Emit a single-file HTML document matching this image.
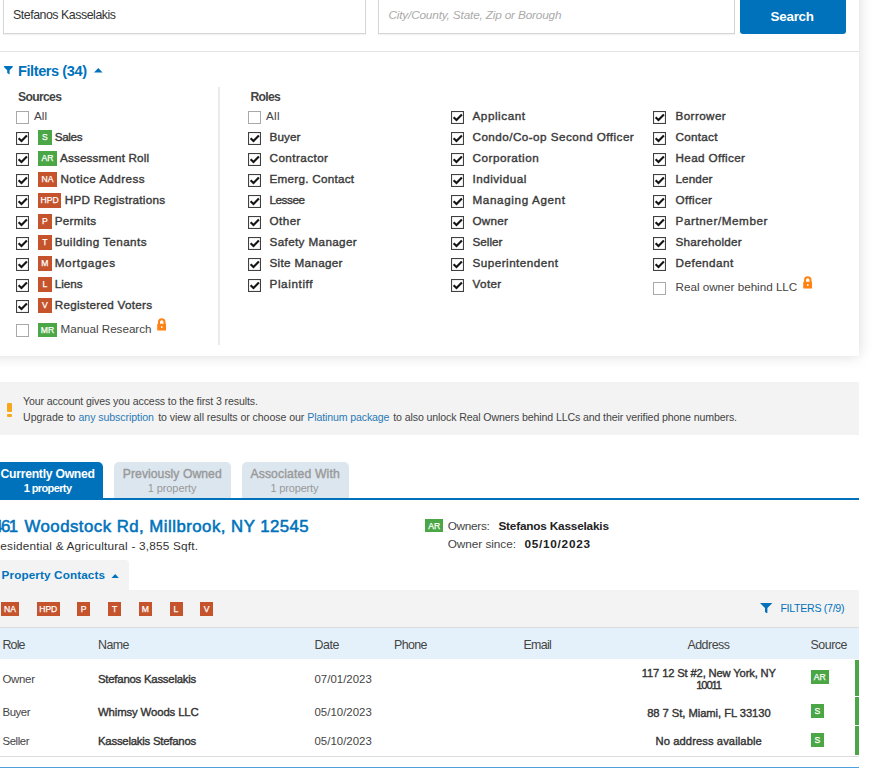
<!DOCTYPE html>
<html lang="en"><head><meta charset="utf-8"><title>Owner search</title>
<style>
html,body{margin:0;padding:0;background:#fff;}
body{width:880px;height:774px;position:relative;overflow:hidden;font-family:"Liberation Sans",sans-serif;color:#333;}
.a{position:absolute;}
.t{position:absolute;white-space:nowrap;line-height:20px;height:20px;}
.cb{position:absolute;display:block;}
.bd{position:absolute;display:block;color:#fff;-webkit-text-stroke:0.25px #fff;text-align:center;font-weight:400;white-space:nowrap;letter-spacing:0;}
</style></head><body>

<div class="a" style="left:-20px;top:-20px;width:879px;height:375.5px;background:#fff;box-shadow:0 0 13px rgba(0,0,0,0.15);"></div>
<div class="a" style="left:3px;top:-6px;width:360.5px;height:37.5px;border:1px solid #d6d6d6;background:#fff;box-shadow:0 1px 1px rgba(0,0,0,0.05);"></div>
<div class="a" style="left:378px;top:-6px;width:355px;height:37.5px;border:1px solid #d6d6d6;background:#fff;box-shadow:0 1px 1px rgba(0,0,0,0.05);"></div>
<div class="a" style="left:740px;top:-6px;width:105.6px;height:39.7px;background:#0072bc;border-radius:3px;"></div>
<div class="a" style="left:0;top:50.6px;width:859px;height:1px;background:#e4e4e4;"></div>
<svg class="cb" style="left:3.8px;top:66.3px" width="8.8" height="8.6" viewBox="0 0 8.8 8.6"><path d="M0.2 0H8.6Q9 0.9 8.4 1.5L5.6 4.3V8.6L3.2 7V4.3L0.4 1.5Q-0.2 0.9 0.2 0Z" fill="#0072bc"/></svg>
<svg class="cb" style="left:94.2px;top:68.4px" width="8.6" height="4.4" viewBox="0 0 8.6 4.4"><path d="M0 4.4L4.3 0L8.6 4.4Z" fill="#0072bc"/></svg>
<div class="a" style="left:218px;top:87px;width:2px;height:258px;background:#ebebeb;"></div>
<svg class="cb" style="left:16px;top:110.5px" width="13" height="13" viewBox="0 0 13 13"><rect x="0.5" y="0.5" width="12" height="12" fill="#fff" stroke="#a9a9a9"/></svg>
<svg class="cb" style="left:16px;top:132.0px" width="13" height="13" viewBox="0 0 13 13"><rect x="0.5" y="0.5" width="12" height="12" fill="#fff" stroke="#404040" stroke-width="1.15"/><path d="M2.6 6.2 L5.5 9.1 L10.9 3.5" fill="none" stroke="#151515" stroke-width="2.1"/></svg>
<svg class="cb" style="left:16px;top:153.0px" width="13" height="13" viewBox="0 0 13 13"><rect x="0.5" y="0.5" width="12" height="12" fill="#fff" stroke="#404040" stroke-width="1.15"/><path d="M2.6 6.2 L5.5 9.1 L10.9 3.5" fill="none" stroke="#151515" stroke-width="2.1"/></svg>
<svg class="cb" style="left:16px;top:174.0px" width="13" height="13" viewBox="0 0 13 13"><rect x="0.5" y="0.5" width="12" height="12" fill="#fff" stroke="#404040" stroke-width="1.15"/><path d="M2.6 6.2 L5.5 9.1 L10.9 3.5" fill="none" stroke="#151515" stroke-width="2.1"/></svg>
<svg class="cb" style="left:16px;top:195.0px" width="13" height="13" viewBox="0 0 13 13"><rect x="0.5" y="0.5" width="12" height="12" fill="#fff" stroke="#404040" stroke-width="1.15"/><path d="M2.6 6.2 L5.5 9.1 L10.9 3.5" fill="none" stroke="#151515" stroke-width="2.1"/></svg>
<svg class="cb" style="left:16px;top:216.0px" width="13" height="13" viewBox="0 0 13 13"><rect x="0.5" y="0.5" width="12" height="12" fill="#fff" stroke="#404040" stroke-width="1.15"/><path d="M2.6 6.2 L5.5 9.1 L10.9 3.5" fill="none" stroke="#151515" stroke-width="2.1"/></svg>
<svg class="cb" style="left:16px;top:237.0px" width="13" height="13" viewBox="0 0 13 13"><rect x="0.5" y="0.5" width="12" height="12" fill="#fff" stroke="#404040" stroke-width="1.15"/><path d="M2.6 6.2 L5.5 9.1 L10.9 3.5" fill="none" stroke="#151515" stroke-width="2.1"/></svg>
<svg class="cb" style="left:16px;top:258.0px" width="13" height="13" viewBox="0 0 13 13"><rect x="0.5" y="0.5" width="12" height="12" fill="#fff" stroke="#404040" stroke-width="1.15"/><path d="M2.6 6.2 L5.5 9.1 L10.9 3.5" fill="none" stroke="#151515" stroke-width="2.1"/></svg>
<svg class="cb" style="left:16px;top:279.0px" width="13" height="13" viewBox="0 0 13 13"><rect x="0.5" y="0.5" width="12" height="12" fill="#fff" stroke="#404040" stroke-width="1.15"/><path d="M2.6 6.2 L5.5 9.1 L10.9 3.5" fill="none" stroke="#151515" stroke-width="2.1"/></svg>
<svg class="cb" style="left:16px;top:300.0px" width="13" height="13" viewBox="0 0 13 13"><rect x="0.5" y="0.5" width="12" height="12" fill="#fff" stroke="#404040" stroke-width="1.15"/><path d="M2.6 6.2 L5.5 9.1 L10.9 3.5" fill="none" stroke="#151515" stroke-width="2.1"/></svg>
<svg class="cb" style="left:16px;top:323.75px" width="13" height="13" viewBox="0 0 13 13"><rect x="0.5" y="0.5" width="12" height="12" fill="#fff" stroke="#a9a9a9"/></svg>
<svg class="cb" style="left:247.5px;top:110.5px" width="13" height="13" viewBox="0 0 13 13"><rect x="0.5" y="0.5" width="12" height="12" fill="#fff" stroke="#a9a9a9"/></svg>
<svg class="cb" style="left:247.5px;top:132.0px" width="13" height="13" viewBox="0 0 13 13"><rect x="0.5" y="0.5" width="12" height="12" fill="#fff" stroke="#404040" stroke-width="1.15"/><path d="M2.6 6.2 L5.5 9.1 L10.9 3.5" fill="none" stroke="#151515" stroke-width="2.1"/></svg>
<svg class="cb" style="left:247.5px;top:153.0px" width="13" height="13" viewBox="0 0 13 13"><rect x="0.5" y="0.5" width="12" height="12" fill="#fff" stroke="#404040" stroke-width="1.15"/><path d="M2.6 6.2 L5.5 9.1 L10.9 3.5" fill="none" stroke="#151515" stroke-width="2.1"/></svg>
<svg class="cb" style="left:247.5px;top:174.0px" width="13" height="13" viewBox="0 0 13 13"><rect x="0.5" y="0.5" width="12" height="12" fill="#fff" stroke="#404040" stroke-width="1.15"/><path d="M2.6 6.2 L5.5 9.1 L10.9 3.5" fill="none" stroke="#151515" stroke-width="2.1"/></svg>
<svg class="cb" style="left:247.5px;top:195.0px" width="13" height="13" viewBox="0 0 13 13"><rect x="0.5" y="0.5" width="12" height="12" fill="#fff" stroke="#404040" stroke-width="1.15"/><path d="M2.6 6.2 L5.5 9.1 L10.9 3.5" fill="none" stroke="#151515" stroke-width="2.1"/></svg>
<svg class="cb" style="left:247.5px;top:216.0px" width="13" height="13" viewBox="0 0 13 13"><rect x="0.5" y="0.5" width="12" height="12" fill="#fff" stroke="#404040" stroke-width="1.15"/><path d="M2.6 6.2 L5.5 9.1 L10.9 3.5" fill="none" stroke="#151515" stroke-width="2.1"/></svg>
<svg class="cb" style="left:247.5px;top:237.0px" width="13" height="13" viewBox="0 0 13 13"><rect x="0.5" y="0.5" width="12" height="12" fill="#fff" stroke="#404040" stroke-width="1.15"/><path d="M2.6 6.2 L5.5 9.1 L10.9 3.5" fill="none" stroke="#151515" stroke-width="2.1"/></svg>
<svg class="cb" style="left:247.5px;top:258.0px" width="13" height="13" viewBox="0 0 13 13"><rect x="0.5" y="0.5" width="12" height="12" fill="#fff" stroke="#404040" stroke-width="1.15"/><path d="M2.6 6.2 L5.5 9.1 L10.9 3.5" fill="none" stroke="#151515" stroke-width="2.1"/></svg>
<svg class="cb" style="left:247.5px;top:279.0px" width="13" height="13" viewBox="0 0 13 13"><rect x="0.5" y="0.5" width="12" height="12" fill="#fff" stroke="#404040" stroke-width="1.15"/><path d="M2.6 6.2 L5.5 9.1 L10.9 3.5" fill="none" stroke="#151515" stroke-width="2.1"/></svg>
<svg class="cb" style="left:450.5px;top:110.5px" width="13" height="13" viewBox="0 0 13 13"><rect x="0.5" y="0.5" width="12" height="12" fill="#fff" stroke="#404040" stroke-width="1.15"/><path d="M2.6 6.2 L5.5 9.1 L10.9 3.5" fill="none" stroke="#151515" stroke-width="2.1"/></svg>
<svg class="cb" style="left:450.5px;top:131.5px" width="13" height="13" viewBox="0 0 13 13"><rect x="0.5" y="0.5" width="12" height="12" fill="#fff" stroke="#404040" stroke-width="1.15"/><path d="M2.6 6.2 L5.5 9.1 L10.9 3.5" fill="none" stroke="#151515" stroke-width="2.1"/></svg>
<svg class="cb" style="left:450.5px;top:152.5px" width="13" height="13" viewBox="0 0 13 13"><rect x="0.5" y="0.5" width="12" height="12" fill="#fff" stroke="#404040" stroke-width="1.15"/><path d="M2.6 6.2 L5.5 9.1 L10.9 3.5" fill="none" stroke="#151515" stroke-width="2.1"/></svg>
<svg class="cb" style="left:450.5px;top:173.5px" width="13" height="13" viewBox="0 0 13 13"><rect x="0.5" y="0.5" width="12" height="12" fill="#fff" stroke="#404040" stroke-width="1.15"/><path d="M2.6 6.2 L5.5 9.1 L10.9 3.5" fill="none" stroke="#151515" stroke-width="2.1"/></svg>
<svg class="cb" style="left:450.5px;top:194.5px" width="13" height="13" viewBox="0 0 13 13"><rect x="0.5" y="0.5" width="12" height="12" fill="#fff" stroke="#404040" stroke-width="1.15"/><path d="M2.6 6.2 L5.5 9.1 L10.9 3.5" fill="none" stroke="#151515" stroke-width="2.1"/></svg>
<svg class="cb" style="left:450.5px;top:215.5px" width="13" height="13" viewBox="0 0 13 13"><rect x="0.5" y="0.5" width="12" height="12" fill="#fff" stroke="#404040" stroke-width="1.15"/><path d="M2.6 6.2 L5.5 9.1 L10.9 3.5" fill="none" stroke="#151515" stroke-width="2.1"/></svg>
<svg class="cb" style="left:450.5px;top:236.5px" width="13" height="13" viewBox="0 0 13 13"><rect x="0.5" y="0.5" width="12" height="12" fill="#fff" stroke="#404040" stroke-width="1.15"/><path d="M2.6 6.2 L5.5 9.1 L10.9 3.5" fill="none" stroke="#151515" stroke-width="2.1"/></svg>
<svg class="cb" style="left:450.5px;top:257.5px" width="13" height="13" viewBox="0 0 13 13"><rect x="0.5" y="0.5" width="12" height="12" fill="#fff" stroke="#404040" stroke-width="1.15"/><path d="M2.6 6.2 L5.5 9.1 L10.9 3.5" fill="none" stroke="#151515" stroke-width="2.1"/></svg>
<svg class="cb" style="left:450.5px;top:278.5px" width="13" height="13" viewBox="0 0 13 13"><rect x="0.5" y="0.5" width="12" height="12" fill="#fff" stroke="#404040" stroke-width="1.15"/><path d="M2.6 6.2 L5.5 9.1 L10.9 3.5" fill="none" stroke="#151515" stroke-width="2.1"/></svg>
<svg class="cb" style="left:653.25px;top:110.5px" width="13" height="13" viewBox="0 0 13 13"><rect x="0.5" y="0.5" width="12" height="12" fill="#fff" stroke="#404040" stroke-width="1.15"/><path d="M2.6 6.2 L5.5 9.1 L10.9 3.5" fill="none" stroke="#151515" stroke-width="2.1"/></svg>
<svg class="cb" style="left:653.25px;top:131.5px" width="13" height="13" viewBox="0 0 13 13"><rect x="0.5" y="0.5" width="12" height="12" fill="#fff" stroke="#404040" stroke-width="1.15"/><path d="M2.6 6.2 L5.5 9.1 L10.9 3.5" fill="none" stroke="#151515" stroke-width="2.1"/></svg>
<svg class="cb" style="left:653.25px;top:152.5px" width="13" height="13" viewBox="0 0 13 13"><rect x="0.5" y="0.5" width="12" height="12" fill="#fff" stroke="#404040" stroke-width="1.15"/><path d="M2.6 6.2 L5.5 9.1 L10.9 3.5" fill="none" stroke="#151515" stroke-width="2.1"/></svg>
<svg class="cb" style="left:653.25px;top:173.5px" width="13" height="13" viewBox="0 0 13 13"><rect x="0.5" y="0.5" width="12" height="12" fill="#fff" stroke="#404040" stroke-width="1.15"/><path d="M2.6 6.2 L5.5 9.1 L10.9 3.5" fill="none" stroke="#151515" stroke-width="2.1"/></svg>
<svg class="cb" style="left:653.25px;top:194.5px" width="13" height="13" viewBox="0 0 13 13"><rect x="0.5" y="0.5" width="12" height="12" fill="#fff" stroke="#404040" stroke-width="1.15"/><path d="M2.6 6.2 L5.5 9.1 L10.9 3.5" fill="none" stroke="#151515" stroke-width="2.1"/></svg>
<svg class="cb" style="left:653.25px;top:215.5px" width="13" height="13" viewBox="0 0 13 13"><rect x="0.5" y="0.5" width="12" height="12" fill="#fff" stroke="#404040" stroke-width="1.15"/><path d="M2.6 6.2 L5.5 9.1 L10.9 3.5" fill="none" stroke="#151515" stroke-width="2.1"/></svg>
<svg class="cb" style="left:653.25px;top:236.5px" width="13" height="13" viewBox="0 0 13 13"><rect x="0.5" y="0.5" width="12" height="12" fill="#fff" stroke="#404040" stroke-width="1.15"/><path d="M2.6 6.2 L5.5 9.1 L10.9 3.5" fill="none" stroke="#151515" stroke-width="2.1"/></svg>
<svg class="cb" style="left:653.25px;top:257.5px" width="13" height="13" viewBox="0 0 13 13"><rect x="0.5" y="0.5" width="12" height="12" fill="#fff" stroke="#404040" stroke-width="1.15"/><path d="M2.6 6.2 L5.5 9.1 L10.9 3.5" fill="none" stroke="#151515" stroke-width="2.1"/></svg>
<svg class="cb" style="left:653.25px;top:282px" width="13" height="13" viewBox="0 0 13 13"><rect x="0.5" y="0.5" width="12" height="12" fill="#fff" stroke="#a9a9a9"/></svg>
<span class="bd" style="left:38.3px;top:130.4px;width:13.25px;height:14.3px;line-height:15.9px;background:#4ba746;font-size:8.6px">S</span>
<span class="bd" style="left:38.3px;top:151.4px;width:18.5px;height:14.3px;line-height:15.9px;background:#4ba746;font-size:8.6px">AR</span>
<span class="bd" style="left:38.3px;top:172.4px;width:18.5px;height:14.3px;line-height:15.9px;background:#c5542c;font-size:8.6px">NA</span>
<span class="bd" style="left:38.3px;top:193.4px;width:22.5px;height:14.3px;line-height:15.9px;background:#c5542c;font-size:8.6px">HPD</span>
<span class="bd" style="left:38.3px;top:214.4px;width:13.25px;height:14.3px;line-height:15.9px;background:#c5542c;font-size:8.6px">P</span>
<span class="bd" style="left:38.3px;top:235.4px;width:13.25px;height:14.3px;line-height:15.9px;background:#c5542c;font-size:8.6px">T</span>
<span class="bd" style="left:38.3px;top:256.4px;width:13.25px;height:14.3px;line-height:15.9px;background:#c5542c;font-size:8.6px">M</span>
<span class="bd" style="left:38.3px;top:277.4px;width:13.25px;height:14.3px;line-height:15.9px;background:#c5542c;font-size:8.6px">L</span>
<span class="bd" style="left:38.3px;top:298.4px;width:13.25px;height:14.3px;line-height:15.9px;background:#c5542c;font-size:8.6px">V</span>
<span class="bd" style="left:38.3px;top:323px;width:18.5px;height:14px;line-height:15.6px;background:#4ba746;font-size:8.6px">MR</span>
<svg class="cb" style="left:156.6px;top:318.2px" width="9.5" height="12.7" viewBox="0 0 9.5 12.7"><path d="M2 6.2V3.9a2.75 2.75 0 0 1 5.5 0V6.2" fill="none" stroke="#ff8212" stroke-width="2"/><rect x="0.2" y="5.8" width="9.1" height="6.8" rx="0.9" fill="#ff8212"/><rect x="4.05" y="8.1" width="1.4" height="1.9" rx="0.5" fill="#fff"/></svg>
<svg class="cb" style="left:802.6px;top:276.0px" width="9.5" height="12.7" viewBox="0 0 9.5 12.7"><path d="M2 6.2V3.9a2.75 2.75 0 0 1 5.5 0V6.2" fill="none" stroke="#ff8212" stroke-width="2"/><rect x="0.2" y="5.8" width="9.1" height="6.8" rx="0.9" fill="#ff8212"/><rect x="4.05" y="8.1" width="1.4" height="1.9" rx="0.5" fill="#fff"/></svg>
<div class="a" style="left:0;top:382px;width:859px;height:53px;background:#f3f3f3;"></div>
<div class="a" style="left:7px;top:403px;width:4.5px;height:9px;background:#f6a81c;border-radius:1px;"></div>
<div class="a" style="left:7px;top:413.5px;width:4.5px;height:3.5px;background:#f6a81c;border-radius:1px;"></div>
<div class="a" style="left:-5px;top:461.75px;width:108.25px;height:37px;background:#0072bc;border-radius:0 5px 0 0;"></div>
<div class="a" style="left:113.6px;top:461.75px;width:117.7px;height:36.5px;background:#dce6ef;border-radius:5px 5px 0 0;"></div>
<div class="a" style="left:241.5px;top:461.75px;width:107.5px;height:36.5px;background:#dce6ef;border-radius:5px 5px 0 0;"></div>
<div class="a" style="left:0;top:498px;width:859px;height:1.7px;background:#0072bc;"></div>
<span class="bd" style="left:425.2px;top:518.6px;width:18.2px;height:13.7px;line-height:15.299999999999999px;background:#4ba746;font-size:8.6px">AR</span>
<div class="a" style="left:0;top:560px;width:128.75px;height:31px;background:#f3f3f3;border-radius:0 4px 0 0;"></div>
<div class="a" style="left:0;top:590.3px;width:858.7px;height:37.2px;background:#f3f3f3;"></div>
<svg class="cb" style="left:110.6px;top:573.9px" width="8.4" height="4.6" viewBox="0 0 8.4 4.6"><path d="M0 4.6L4.2 0L8.4 4.6Z" fill="#0072bc"/></svg>
<span class="bd" style="left:1px;top:602px;width:18.2px;height:13.9px;line-height:15.5px;background:#c5542c;font-size:8.6px">NA</span>
<span class="bd" style="left:37px;top:602px;width:22.5px;height:13.9px;line-height:15.5px;background:#c5542c;font-size:8.6px">HPD</span>
<span class="bd" style="left:77px;top:602px;width:13.25px;height:13.9px;line-height:15.5px;background:#c5542c;font-size:8.6px">P</span>
<span class="bd" style="left:108px;top:602px;width:13px;height:13.9px;line-height:15.5px;background:#c5542c;font-size:8.6px">T</span>
<span class="bd" style="left:138.75px;top:602px;width:13px;height:13.9px;line-height:15.5px;background:#c5542c;font-size:8.6px">M</span>
<span class="bd" style="left:169.5px;top:602px;width:13px;height:13.9px;line-height:15.5px;background:#c5542c;font-size:8.6px">L</span>
<span class="bd" style="left:200px;top:602px;width:13.25px;height:13.9px;line-height:15.5px;background:#c5542c;font-size:8.6px">V</span>
<svg class="cb" style="left:760.2px;top:602.6px" width="12.4" height="10.6" viewBox="0 0 12.4 10.6"><path d="M0 0H12.4L7.4 5V10.6L5 9V5Z" fill="#0072bc"/></svg>
<div class="a" style="left:0;top:627.3px;width:858.7px;height:1px;background:#dcdcdc;"></div>
<div class="a" style="left:0;top:628.3px;width:858.7px;height:30.5px;background:#e5f1fa;"></div>
<div class="a" style="left:855.3px;top:659.8px;width:3.5px;height:36.5px;background:#4ba746;"></div>
<div class="a" style="left:855.3px;top:697.2px;width:3.5px;height:28.3px;background:#4ba746;"></div>
<div class="a" style="left:855.3px;top:726.4px;width:3.5px;height:28.3px;background:#4ba746;"></div>
<span class="bd" style="left:810.7px;top:670.2px;width:18.3px;height:14px;line-height:15.6px;background:#4ba746;font-size:8.6px">AR</span>
<span class="bd" style="left:810.7px;top:703.9px;width:13.2px;height:13.9px;line-height:15.5px;background:#4ba746;font-size:8.6px">S</span>
<span class="bd" style="left:810.7px;top:733px;width:13.2px;height:13.8px;line-height:15.4px;background:#4ba746;font-size:8.6px">S</span>
<div class="a" style="left:0;top:756px;width:858.7px;height:1px;background:#dcdcdc;"></div>
<div class="a" style="left:0;top:766.8px;width:858.7px;height:1px;background:#4f9fdc;"></div>
<span class="t" id="t0" style="left:13.00px;top:5.20px;font-size:12.4px;font-weight:400;color:#333;letter-spacing:-0.477px;">Stefanos Kasselakis</span>
<span class="t" id="t1" style="left:388.40px;top:4.91px;font-size:11.8px;font-weight:400;color:#aaa;letter-spacing:-0.170px;font-style:italic;">City/County, State, Zip or Borough</span>
<span class="t" id="t2" style="left:770.60px;top:6.56px;font-size:13.4px;font-weight:700;color:#fff;letter-spacing:-0.255px;">Search</span>
<span class="t" id="t3" style="left:18.00px;top:60.54px;font-size:14.6px;font-weight:700;color:#0072bc;letter-spacing:-0.437px;">Filters (34)</span>
<span class="t" id="t4" style="left:18.00px;top:86.57px;font-size:12.2px;font-weight:700;color:#444;letter-spacing:-0.683px;">Sources</span>
<span class="t" id="t5" style="left:250.50px;top:86.57px;font-size:12.2px;font-weight:700;color:#444;letter-spacing:-0.723px;">Roles</span>
<span class="t" id="t6" style="left:34.00px;top:106.35px;font-size:11.7px;font-weight:400;color:#444;letter-spacing:-0.000px;">All</span>
<span class="t" id="t7" style="left:54.75px;top:127.35px;font-size:11.7px;font-weight:400;color:#3a3a3a;letter-spacing:-0.375px;-webkit-text-stroke:0.38px #3a3a3a;">Sales</span>
<span class="t" id="t8" style="left:60.00px;top:148.35px;font-size:11.7px;font-weight:400;color:#3a3a3a;letter-spacing:0.140px;-webkit-text-stroke:0.38px #3a3a3a;">Assessment Roll</span>
<span class="t" id="t9" style="left:60.50px;top:169.35px;font-size:11.7px;font-weight:400;color:#3a3a3a;letter-spacing:0.415px;-webkit-text-stroke:0.38px #3a3a3a;">Notice Address</span>
<span class="t" id="t10" style="left:64.75px;top:190.35px;font-size:11.7px;font-weight:400;color:#3a3a3a;letter-spacing:0.258px;-webkit-text-stroke:0.38px #3a3a3a;">HPD Registrations</span>
<span class="t" id="t11" style="left:54.75px;top:211.35px;font-size:11.7px;font-weight:400;color:#3a3a3a;letter-spacing:0.273px;-webkit-text-stroke:0.38px #3a3a3a;">Permits</span>
<span class="t" id="t12" style="left:54.75px;top:232.35px;font-size:11.7px;font-weight:400;color:#3a3a3a;letter-spacing:0.412px;-webkit-text-stroke:0.38px #3a3a3a;">Building Tenants</span>
<span class="t" id="t13" style="left:54.75px;top:253.35px;font-size:11.7px;font-weight:400;color:#3a3a3a;letter-spacing:0.629px;-webkit-text-stroke:0.38px #3a3a3a;">Mortgages</span>
<span class="t" id="t14" style="left:54.75px;top:274.35px;font-size:11.7px;font-weight:400;color:#3a3a3a;letter-spacing:-0.051px;-webkit-text-stroke:0.38px #3a3a3a;">Liens</span>
<span class="t" id="t15" style="left:54.75px;top:295.35px;font-size:11.7px;font-weight:400;color:#3a3a3a;letter-spacing:0.271px;-webkit-text-stroke:0.38px #3a3a3a;">Registered Voters</span>
<span class="t" id="t16" style="left:60.50px;top:319.45px;font-size:11.7px;font-weight:400;color:#444;letter-spacing:-0.044px;">Manual Research</span>
<span class="t" id="t17" style="left:266.00px;top:106.35px;font-size:11.7px;font-weight:400;color:#444;letter-spacing:0.250px;">All</span>
<span class="t" id="t18" style="left:269.50px;top:127.35px;font-size:11.7px;font-weight:400;color:#3a3a3a;letter-spacing:0.114px;-webkit-text-stroke:0.38px #3a3a3a;">Buyer</span>
<span class="t" id="t19" style="left:269.50px;top:148.35px;font-size:11.7px;font-weight:400;color:#3a3a3a;letter-spacing:0.436px;-webkit-text-stroke:0.38px #3a3a3a;">Contractor</span>
<span class="t" id="t20" style="left:269.50px;top:169.35px;font-size:11.7px;font-weight:400;color:#3a3a3a;letter-spacing:0.253px;-webkit-text-stroke:0.38px #3a3a3a;">Emerg. Contact</span>
<span class="t" id="t21" style="left:269.50px;top:190.35px;font-size:11.7px;font-weight:400;color:#3a3a3a;letter-spacing:-0.439px;-webkit-text-stroke:0.38px #3a3a3a;">Lessee</span>
<span class="t" id="t22" style="left:269.50px;top:211.35px;font-size:11.7px;font-weight:400;color:#3a3a3a;letter-spacing:0.442px;-webkit-text-stroke:0.38px #3a3a3a;">Other</span>
<span class="t" id="t23" style="left:269.50px;top:232.35px;font-size:11.7px;font-weight:400;color:#3a3a3a;letter-spacing:0.364px;-webkit-text-stroke:0.38px #3a3a3a;">Safety Manager</span>
<span class="t" id="t24" style="left:269.50px;top:253.35px;font-size:11.7px;font-weight:400;color:#3a3a3a;letter-spacing:0.316px;-webkit-text-stroke:0.38px #3a3a3a;">Site Manager</span>
<span class="t" id="t25" style="left:269.50px;top:274.35px;font-size:11.7px;font-weight:400;color:#3a3a3a;letter-spacing:0.609px;-webkit-text-stroke:0.38px #3a3a3a;">Plaintiff</span>
<span class="t" id="t26" style="left:472.50px;top:106.35px;font-size:11.7px;font-weight:400;color:#3a3a3a;letter-spacing:0.552px;-webkit-text-stroke:0.38px #3a3a3a;">Applicant</span>
<span class="t" id="t27" style="left:472.50px;top:127.35px;font-size:11.7px;font-weight:400;color:#3a3a3a;letter-spacing:0.455px;-webkit-text-stroke:0.38px #3a3a3a;">Condo/Co-op Second Officer</span>
<span class="t" id="t28" style="left:472.50px;top:148.35px;font-size:11.7px;font-weight:400;color:#3a3a3a;letter-spacing:0.517px;-webkit-text-stroke:0.38px #3a3a3a;">Corporation</span>
<span class="t" id="t29" style="left:472.50px;top:169.35px;font-size:11.7px;font-weight:400;color:#3a3a3a;letter-spacing:0.484px;-webkit-text-stroke:0.38px #3a3a3a;">Individual</span>
<span class="t" id="t30" style="left:472.50px;top:190.35px;font-size:11.7px;font-weight:400;color:#3a3a3a;letter-spacing:0.616px;-webkit-text-stroke:0.38px #3a3a3a;">Managing Agent</span>
<span class="t" id="t31" style="left:472.50px;top:211.35px;font-size:11.7px;font-weight:400;color:#3a3a3a;letter-spacing:0.266px;-webkit-text-stroke:0.38px #3a3a3a;">Owner</span>
<span class="t" id="t32" style="left:472.50px;top:232.35px;font-size:11.7px;font-weight:400;color:#3a3a3a;letter-spacing:0.021px;-webkit-text-stroke:0.38px #3a3a3a;">Seller</span>
<span class="t" id="t33" style="left:472.50px;top:253.35px;font-size:11.7px;font-weight:400;color:#3a3a3a;letter-spacing:0.477px;-webkit-text-stroke:0.38px #3a3a3a;">Superintendent</span>
<span class="t" id="t34" style="left:472.50px;top:274.35px;font-size:11.7px;font-weight:400;color:#3a3a3a;letter-spacing:0.364px;-webkit-text-stroke:0.38px #3a3a3a;">Voter</span>
<span class="t" id="t35" style="left:675.50px;top:106.35px;font-size:11.7px;font-weight:400;color:#3a3a3a;letter-spacing:0.403px;-webkit-text-stroke:0.38px #3a3a3a;">Borrower</span>
<span class="t" id="t36" style="left:675.50px;top:127.35px;font-size:11.7px;font-weight:400;color:#3a3a3a;letter-spacing:0.286px;-webkit-text-stroke:0.38px #3a3a3a;">Contact</span>
<span class="t" id="t37" style="left:675.50px;top:148.35px;font-size:11.7px;font-weight:400;color:#3a3a3a;letter-spacing:0.373px;-webkit-text-stroke:0.38px #3a3a3a;">Head Officer</span>
<span class="t" id="t38" style="left:675.50px;top:169.35px;font-size:11.7px;font-weight:400;color:#3a3a3a;letter-spacing:0.121px;-webkit-text-stroke:0.38px #3a3a3a;">Lender</span>
<span class="t" id="t39" style="left:675.50px;top:190.35px;font-size:11.7px;font-weight:400;color:#3a3a3a;letter-spacing:0.382px;-webkit-text-stroke:0.38px #3a3a3a;">Officer</span>
<span class="t" id="t40" style="left:675.50px;top:211.35px;font-size:11.7px;font-weight:400;color:#3a3a3a;letter-spacing:0.581px;-webkit-text-stroke:0.38px #3a3a3a;">Partner/Member</span>
<span class="t" id="t41" style="left:675.50px;top:232.35px;font-size:11.7px;font-weight:400;color:#3a3a3a;letter-spacing:0.252px;-webkit-text-stroke:0.38px #3a3a3a;">Shareholder</span>
<span class="t" id="t42" style="left:675.50px;top:253.35px;font-size:11.7px;font-weight:400;color:#3a3a3a;letter-spacing:0.482px;-webkit-text-stroke:0.38px #3a3a3a;">Defendant</span>
<span class="t" id="t43" style="left:675.50px;top:277.25px;font-size:11.7px;font-weight:400;color:#444;letter-spacing:-0.018px;">Real owner behind LLC</span>
<span class="t" id="t44" style="left:23.00px;top:390.93px;font-size:10.6px;font-weight:400;color:#444;letter-spacing:-0.105px;">Your account gives you access to the first 3 results.</span>
<span class="t" id="t45" style="left:23.00px;top:407.03px;font-size:10.6px;font-weight:400;color:#444;letter-spacing:0.009px;">Upgrade to</span>
<span class="t" id="t46" style="left:78.50px;top:407.03px;font-size:10.6px;font-weight:400;color:#2a7ab8;letter-spacing:-0.071px;">any subscription</span>
<span class="t" id="t47" style="left:158.20px;top:407.03px;font-size:10.6px;font-weight:400;color:#444;letter-spacing:-0.069px;">to view all results or choose our</span>
<span class="t" id="t48" style="left:307.30px;top:407.03px;font-size:10.6px;font-weight:400;color:#2a7ab8;letter-spacing:-0.135px;">Platinum package</span>
<span class="t" id="t49" style="left:393.30px;top:407.03px;font-size:10.6px;font-weight:400;color:#444;letter-spacing:-0.119px;">to also unlock Real Owners behind LLCs and their verified phone numbers.</span>
<span class="t" id="t50" style="left:0.50px;top:463.77px;font-size:12.2px;font-weight:700;color:#fff;letter-spacing:-0.264px;">Currently Owned</span>
<span class="t" id="t51" style="left:23.75px;top:477.59px;font-size:11px;font-weight:700;color:#fff;letter-spacing:-0.616px;">1 property</span>
<span class="t" id="t52" style="left:122.80px;top:463.77px;font-size:12.2px;font-weight:400;color:#999;letter-spacing:0.045px;-webkit-text-stroke:0.38px #999;">Previously Owned</span>
<span class="t" id="t53" style="left:147.70px;top:477.59px;font-size:11px;font-weight:400;color:#999;letter-spacing:-0.081px;">1 property</span>
<span class="t" id="t54" style="left:250.40px;top:463.77px;font-size:12.2px;font-weight:400;color:#999;letter-spacing:0.137px;-webkit-text-stroke:0.38px #999;">Associated With</span>
<span class="t" id="t55" style="left:270.50px;top:477.59px;font-size:11px;font-weight:400;color:#999;letter-spacing:-0.170px;">1 property</span>
<span class="t" id="t56" style="left:-6.70px;top:517.18px;font-size:16.8px;font-weight:400;color:#0072bc;letter-spacing:-1.606px;-webkit-text-stroke:0.55px #0072bc;">461</span>
<span class="t" id="t57" style="left:24.50px;top:517.18px;font-size:16.8px;font-weight:400;color:#0072bc;letter-spacing:0.477px;-webkit-text-stroke:0.55px #0072bc;">Woodstock Rd, Millbrook, NY 12545</span>
<span class="t" id="t58" style="left:-8.40px;top:536.41px;font-size:11.8px;font-weight:400;color:#333;letter-spacing:0.198px;">Residential &amp; Agricultural - 3,855 Sqft.</span>
<span class="t" id="t59" style="left:447.70px;top:516.21px;font-size:11.8px;font-weight:400;color:#444;letter-spacing:-0.305px;">Owners:</span>
<span class="t" id="t60" style="left:498.40px;top:516.21px;font-size:11.8px;font-weight:700;color:#222;letter-spacing:-0.194px;">Stefanos Kasselakis</span>
<span class="t" id="t61" style="left:447.70px;top:534.21px;font-size:11.8px;font-weight:400;color:#444;letter-spacing:-0.051px;">Owner since:</span>
<span class="t" id="t62" style="left:524.50px;top:534.21px;font-size:11.8px;font-weight:700;color:#222;letter-spacing:0.717px;">05/10/2023</span>
<span class="t" id="t63" style="left:1.60px;top:564.95px;font-size:11.7px;font-weight:700;color:#0072bc;letter-spacing:0.130px;">Property Contacts</span>
<span class="t" id="t64" style="left:780.40px;top:598.33px;font-size:10.6px;font-weight:400;color:#0072bc;letter-spacing:-0.284px;">FILTERS (7/9)</span>
<span class="t" id="t65" style="left:2.50px;top:634.90px;font-size:12.4px;font-weight:400;color:#444;letter-spacing:-0.828px;">Role</span>
<span class="t" id="t66" style="left:98.00px;top:634.90px;font-size:12.4px;font-weight:400;color:#444;letter-spacing:-0.519px;">Name</span>
<span class="t" id="t67" style="left:314.50px;top:634.90px;font-size:12.4px;font-weight:400;color:#444;letter-spacing:-0.429px;">Date</span>
<span class="t" id="t68" style="left:394.00px;top:634.90px;font-size:12.4px;font-weight:400;color:#444;letter-spacing:-0.608px;">Phone</span>
<span class="t" id="t69" style="left:523.50px;top:634.90px;font-size:12.4px;font-weight:400;color:#444;letter-spacing:-0.674px;">Email</span>
<span class="t" id="t70" style="left:687.40px;top:634.90px;font-size:12.4px;font-weight:400;color:#444;letter-spacing:-0.475px;">Address</span>
<span class="t" id="t71" style="left:810.50px;top:634.90px;font-size:12.4px;font-weight:400;color:#444;letter-spacing:-0.453px;">Source</span>
<span class="t" id="t72" style="left:2.50px;top:668.65px;font-size:11.4px;font-weight:400;color:#444;letter-spacing:-0.266px;">Owner</span>
<span class="t" id="t73" style="left:2.50px;top:701.85px;font-size:11.4px;font-weight:400;color:#444;letter-spacing:-0.440px;">Buyer</span>
<span class="t" id="t74" style="left:2.50px;top:731.05px;font-size:11.4px;font-weight:400;color:#444;letter-spacing:-0.425px;">Seller</span>
<span class="t" id="t75" style="left:98.00px;top:668.65px;font-size:11.4px;font-weight:400;color:#333;letter-spacing:-0.241px;-webkit-text-stroke:0.38px #333;">Stefanos Kasselakis</span>
<span class="t" id="t76" style="left:98.00px;top:701.85px;font-size:11.4px;font-weight:400;color:#333;letter-spacing:-0.148px;-webkit-text-stroke:0.38px #333;">Whimsy Woods LLC</span>
<span class="t" id="t77" style="left:98.00px;top:731.05px;font-size:11.4px;font-weight:400;color:#333;letter-spacing:-0.241px;-webkit-text-stroke:0.38px #333;">Kasselakis Stefanos</span>
<span class="t" id="t78" style="left:314.50px;top:668.65px;font-size:11.4px;font-weight:400;color:#444;letter-spacing:0.031px;">07/01/2023</span>
<span class="t" id="t79" style="left:314.50px;top:701.85px;font-size:11.4px;font-weight:400;color:#444;letter-spacing:0.031px;">05/10/2023</span>
<span class="t" id="t80" style="left:314.50px;top:731.05px;font-size:11.4px;font-weight:400;color:#444;letter-spacing:0.031px;">05/10/2023</span>
<span class="t" id="t81" style="left:641.80px;top:662.82px;font-size:11.2px;font-weight:400;color:#333;letter-spacing:-0.147px;-webkit-text-stroke:0.38px #333;">117 12 St #2, New York, NY</span>
<span class="t" id="t82" style="left:696.20px;top:675.42px;font-size:11.2px;font-weight:400;color:#333;letter-spacing:-1.122px;-webkit-text-stroke:0.38px #333;">10011</span>
<span class="t" id="t83" style="left:647.20px;top:702.62px;font-size:11.2px;font-weight:400;color:#333;letter-spacing:-0.047px;-webkit-text-stroke:0.38px #333;">88 7 St, Miami, FL 33130</span>
<span class="t" id="t84" style="left:655.50px;top:730.62px;font-size:11.2px;font-weight:400;color:#333;letter-spacing:0.095px;-webkit-text-stroke:0.38px #333;">No address available</span>
</body></html>
